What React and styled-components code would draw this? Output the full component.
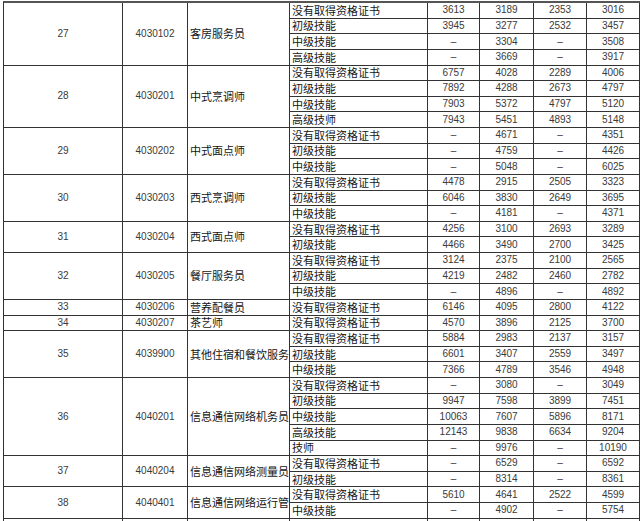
import styled, { createGlobalStyle } from "styled-components";

const GlobalStyle = createGlobalStyle`
  html, body {
    margin: 0;
    padding: 0;
    background: #fff;
    overflow: hidden;
  }
  body {
    font-family: "Liberation Sans", "Noto Sans CJK SC", sans-serif;
  }
`;

const Sheet = styled.div`
  margin: 1px 0 0 3px;
  display: grid;
  grid-template-columns: 119px 65px 102px 138px 52px 54px 53px 53px;
  grid-auto-rows: 15.64px;
  border-left: 1px solid #333;
  border-top: 2px solid #555;
  width: 637px;
`;

const Cell = styled.div`
  grid-row: span ${(p) => p.$span || 1};
  display: flex;
  align-items: center;
  justify-content: ${(p) => (p.$left ? "flex-start" : "center")};
  padding: ${(p) => (p.$left ? "0 0 0 2px" : "0")};
  border-right: 1px solid #333;
  border-bottom: 1px solid #333;
  overflow: hidden;
  white-space: nowrap;
  line-height: 1;
  box-sizing: border-box;
`;

const NumCell = styled(Cell)`
  font-family: "Liberation Sans", Arial, sans-serif;
  font-size: 10px;
  color: #3a3a3a;
`;

const TextCell = styled(Cell)`
  font-family: "Noto Sans CJK SC", sans-serif;
  font-size: 11px;
  color: #151515;
`;

const groups = [
  ["27", "4030102", "客房服务员", [
    ["没有取得资格证书", "3613", "3189", "2353", "3016"],
    ["初级技能", "3945", "3277", "2532", "3457"],
    ["中级技能", "–", "3304", "–", "3508"],
    ["高级技能", "–", "3669", "–", "3917"],
  ]],
  ["28", "4030201", "中式烹调师", [
    ["没有取得资格证书", "6757", "4028", "2289", "4006"],
    ["初级技能", "7892", "4288", "2673", "4797"],
    ["中级技能", "7903", "5372", "4797", "5120"],
    ["高级技师", "7943", "5451", "4893", "5148"],
  ]],
  ["29", "4030202", "中式面点师", [
    ["没有取得资格证书", "–", "4671", "–", "4351"],
    ["初级技能", "–", "4759", "–", "4426"],
    ["中级技能", "–", "5048", "–", "6025"],
  ]],
  ["30", "4030203", "西式烹调师", [
    ["没有取得资格证书", "4478", "2915", "2505", "3323"],
    ["初级技能", "6046", "3830", "2649", "3695"],
    ["中级技能", "–", "4181", "–", "4371"],
  ]],
  ["31", "4030204", "西式面点师", [
    ["没有取得资格证书", "4256", "3100", "2693", "3289"],
    ["初级技能", "4466", "3490", "2700", "3425"],
  ]],
  ["32", "4030205", "餐厅服务员", [
    ["没有取得资格证书", "3124", "2375", "2100", "2565"],
    ["初级技能", "4219", "2482", "2460", "2782"],
    ["中级技能", "–", "4896", "–", "4892"],
  ]],
  ["33", "4030206", "营养配餐员", [
    ["没有取得资格证书", "6146", "4095", "2800", "4122"],
  ]],
  ["34", "4030207", "茶艺师", [
    ["没有取得资格证书", "4570", "3896", "2125", "3700"],
  ]],
  ["35", "4039900", "其他住宿和餐饮服务", [
    ["没有取得资格证书", "5884", "2983", "2137", "3157"],
    ["初级技能", "6601", "3407", "2559", "3497"],
    ["中级技能", "7366", "4789", "3546", "4948"],
  ]],
  ["36", "4040201", "信息通信网络机务员", [
    ["没有取得资格证书", "–", "3080", "–", "3049"],
    ["初级技能", "9947", "7598", "3899", "7451"],
    ["中级技能", "10063", "7607", "5896", "8171"],
    ["高级技能", "12143", "9838", "6634", "9204"],
    ["技师", "–", "9976", "–", "10190"],
  ]],
  ["37", "4040204", "信息通信网络测量员", [
    ["没有取得资格证书", "–", "6529", "–", "6592"],
    ["初级技能", "–", "8314", "–", "8361"],
  ]],
  ["38", "4040401", "信息通信网络运行管", [
    ["没有取得资格证书", "5610", "4641", "2522", "4599"],
    ["中级技能", "–", "4902", "–", "5754"],
  ]],
  ["", "", "", [["", "", "", "", ""]]],
];

export default function App() {
  return (
    <>
      <GlobalStyle />
      <Sheet>
        {groups.map(([no, code, name, rows]) => [
          <NumCell key={`${no}-no`} $span={rows.length}>{no}</NumCell>,
          <NumCell key={`${no}-code`} $span={rows.length}>{code}</NumCell>,
          <TextCell key={`${no}-name`} $span={rows.length} $left>{name}</TextCell>,
          ...rows.flatMap(([level, ...nums], i) => [
            <TextCell key={`${no}-${i}-l`} $left>{level}</TextCell>,
            ...nums.map((n, j) => (
              <NumCell key={`${no}-${i}-${j}`}>{n}</NumCell>
            )),
          ]),
        ])}
      </Sheet>
    </>
  );
}
